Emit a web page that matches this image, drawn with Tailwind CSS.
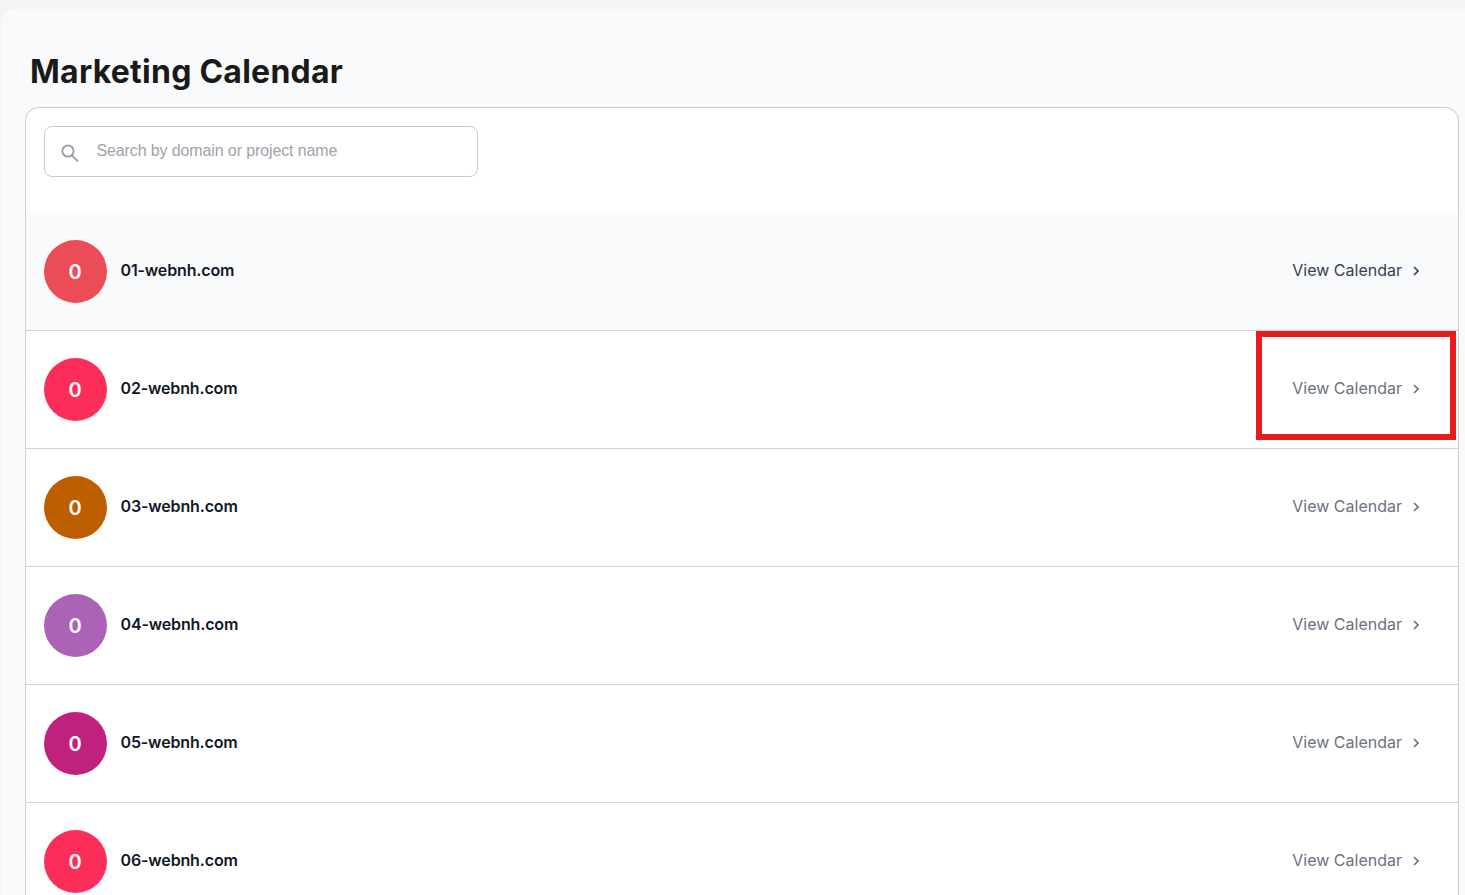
<!DOCTYPE html>
<html lang="en">
<head>
<meta charset="utf-8">
<script src="https://cdn.jsdelivr.net/npm/@tailwindcss/browser@4"></script>
<title>Marketing Calendar</title>
</head>
<body class="h-[895px] w-[1465px] overflow-hidden bg-[#f4f4f4] font-['Inter',sans-serif]">
<div class="relative h-[895px] pt-[9px] pl-[2px]">
  <main class="h-[886px] overflow-hidden rounded-tl-[14px] bg-[#f9fafb] pl-[23px] pr-[6px]">
    <h1 class="flex h-[98px] items-end pb-[15px] pl-[5px] font-['Inter',sans-serif] text-[32px] leading-[40px] font-bold tracking-[0.25px] text-[#1a1a1a]">Marketing Calendar</h1>
    <section class="rounded-t-[14px] border border-b-0 border-[#cfcfd3] bg-white">
      <div class="h-[105px] px-[18px] pt-[18px]">
        <div class="flex h-[51px] w-[434px] items-center rounded-[8px] border border-[#c9c9cd] bg-white pl-[14px]">
          <svg class="h-[22px] w-[22px] text-[#9ca3af]" viewBox="0 0 22 22" fill="none" stroke="currentColor" stroke-width="2"><circle cx="9" cy="10" r="5.6"/><path d="M13 14.5l5.5 5.5" stroke-linecap="round"/></svg>
          <span class="ml-[15.5px] mb-[2px] font-['Liberation_Sans',sans-serif] text-base tracking-[-0.12px] text-[#a1a1aa]">Search by domain or project name</span>
        </div>
      </div>

      <div class="flex h-[118px] items-center border-b border-[#d1d5db] bg-[#f9fafb] pl-[18px] pr-[39px]">
        <div class="flex h-[63px] w-[63px] items-center justify-center rounded-full bg-[#ec4c55] pr-[1px] text-xl font-semibold text-white">0</div>
        <div class="ml-[13.5px] mb-1 text-base font-semibold tracking-[-0.15px] text-[#111827]">01-webnh.com</div>
        <div class="mb-1 ml-auto flex items-center text-base text-[#374151]">View Calendar
          <svg class="ml-[11px] mt-[2px] h-[10px] w-[6px]" viewBox="0 0 6 10" fill="none" stroke="currentColor" stroke-width="1.6"><path d="M1 1l4 4-4 4"/></svg>
        </div>
      </div>

      <div class="flex h-[118px] items-center border-b border-[#d1d5db] pl-[18px] pr-[39px]">
        <div class="flex h-[63px] w-[63px] items-center justify-center rounded-full bg-[#fb2e5a] pr-[1px] text-xl font-semibold text-white">0</div>
        <div class="ml-[13.5px] mb-1 text-base font-semibold tracking-[-0.15px] text-[#111827]">02-webnh.com</div>
        <div class="mb-1 ml-auto flex items-center text-base text-[#6b7280]">View Calendar
          <svg class="ml-[11px] mt-[2px] h-[10px] w-[6px]" viewBox="0 0 6 10" fill="none" stroke="currentColor" stroke-width="1.6"><path d="M1 1l4 4-4 4"/></svg>
        </div>
      </div>

      <div class="flex h-[118px] items-center border-b border-[#d1d5db] pl-[18px] pr-[39px]">
        <div class="flex h-[63px] w-[63px] items-center justify-center rounded-full bg-[#bd5e00] pr-[1px] text-xl font-semibold text-white">0</div>
        <div class="ml-[13.5px] mb-1 text-base font-semibold tracking-[-0.15px] text-[#111827]">03-webnh.com</div>
        <div class="mb-1 ml-auto flex items-center text-base text-[#6b7280]">View Calendar
          <svg class="ml-[11px] mt-[2px] h-[10px] w-[6px]" viewBox="0 0 6 10" fill="none" stroke="currentColor" stroke-width="1.6"><path d="M1 1l4 4-4 4"/></svg>
        </div>
      </div>

      <div class="flex h-[118px] items-center border-b border-[#d1d5db] pl-[18px] pr-[39px]">
        <div class="flex h-[63px] w-[63px] items-center justify-center rounded-full bg-[#ab63b5] pr-[1px] text-xl font-semibold text-white">0</div>
        <div class="ml-[13.5px] mb-1 text-base font-semibold tracking-[-0.15px] text-[#111827]">04-webnh.com</div>
        <div class="mb-1 ml-auto flex items-center text-base text-[#6b7280]">View Calendar
          <svg class="ml-[11px] mt-[2px] h-[10px] w-[6px]" viewBox="0 0 6 10" fill="none" stroke="currentColor" stroke-width="1.6"><path d="M1 1l4 4-4 4"/></svg>
        </div>
      </div>

      <div class="flex h-[118px] items-center border-b border-[#d1d5db] pl-[18px] pr-[39px]">
        <div class="flex h-[63px] w-[63px] items-center justify-center rounded-full bg-[#c0217f] pr-[1px] text-xl font-semibold text-white">0</div>
        <div class="ml-[13.5px] mb-1 text-base font-semibold tracking-[-0.15px] text-[#111827]">05-webnh.com</div>
        <div class="mb-1 ml-auto flex items-center text-base text-[#6b7280]">View Calendar
          <svg class="ml-[11px] mt-[2px] h-[10px] w-[6px]" viewBox="0 0 6 10" fill="none" stroke="currentColor" stroke-width="1.6"><path d="M1 1l4 4-4 4"/></svg>
        </div>
      </div>

      <div class="flex h-[118px] items-center border-b border-[#d1d5db] pl-[18px] pr-[39px]">
        <div class="flex h-[63px] w-[63px] items-center justify-center rounded-full bg-[#fb2e5a] pr-[1px] text-xl font-semibold text-white">0</div>
        <div class="ml-[13.5px] mb-1 text-base font-semibold tracking-[-0.15px] text-[#111827]">06-webnh.com</div>
        <div class="mb-1 ml-auto flex items-center text-base text-[#6b7280]">View Calendar
          <svg class="ml-[11px] mt-[2px] h-[10px] w-[6px]" viewBox="0 0 6 10" fill="none" stroke="currentColor" stroke-width="1.6"><path d="M1 1l4 4-4 4"/></svg>
        </div>
      </div>
    </section>
  </main>
  <div class="absolute left-[1256px] top-[331px] h-[109px] w-[200px] border-[6px] border-[#e81c1f]"></div>
</div>
</body>
</html>
